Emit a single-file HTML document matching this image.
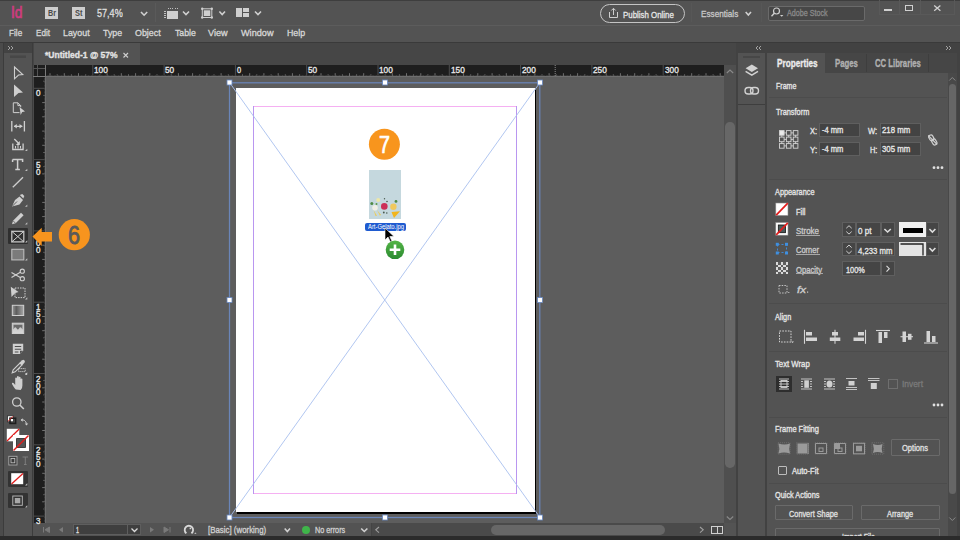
<!DOCTYPE html>
<html><head><meta charset="utf-8">
<style>
*{margin:0;padding:0;box-sizing:border-box}
html,body{width:960px;height:540px;overflow:hidden;background:#535353;font-family:"Liberation Sans",sans-serif}
.a{position:absolute}
.t{position:absolute;white-space:nowrap;line-height:1;-webkit-text-stroke:0.32px currentColor}
svg{position:absolute;overflow:visible}
</style></head><body>
<div class="a" style="left:0px;top:0px;width:960px;height:540px;background:#535353;"></div>
<div class="a" style="left:0px;top:0px;width:960px;height:1px;background:#3e3e3e;"></div>
<div class="a" style="left:0px;top:24.6px;width:960px;height:1.2px;background:#5c5c5c;"></div>
<div class="a" style="left:0px;top:42px;width:960px;height:1px;background:#3a3a3a;"></div>
<div class="a" style="left:0px;top:43px;width:3px;height:497px;background:#4b4b4b;"></div>
<div class="a" style="left:3px;top:43px;width:1px;height:494px;background:#3c3c3c;"></div>
<div class="a" style="left:32px;top:43px;width:1px;height:494px;background:#3c3c3c;"></div>
<div class="a" style="left:4px;top:43px;width:28px;height:10px;background:#434343;"></div>
<div class="a" style="left:33px;top:43px;width:703px;height:22px;background:#464646;"></div>
<div class="a" style="left:34px;top:43px;width:106px;height:22px;background:#535353;"></div>
<div class="a" style="left:34px;top:65px;width:690px;height:12px;background:#1e1e1e;"></div>
<div class="a" style="left:33px;top:65px;width:1px;height:458px;background:#4a4a4a;"></div>
<div class="a" style="left:34px;top:77px;width:12px;height:446px;background:#1e1e1e;"></div>
<div class="a" style="left:46px;top:77px;width:678px;height:446px;background:#5d5d5d;"></div>
<div class="a" style="left:724px;top:65px;width:12px;height:458px;background:#4f4f4f;"></div>
<div class="a" style="left:33px;top:523px;width:703px;height:13px;background:#535353;"></div>
<div class="a" style="left:371px;top:523px;width:353px;height:13px;background:#4a4a4a;"></div>
<div class="a" style="left:0px;top:536px;width:960px;height:4px;background:#2b2b2b;"></div>
<div class="a" style="left:736px;top:43px;width:224px;height:493px;background:#424242;"></div>
<div class="a" style="left:738px;top:53px;width:27px;height:483px;background:#535353;"></div>
<div class="a" style="left:767px;top:53px;width:190px;height:483px;background:#535353;"></div>
<div class="t" style="left:10.75px;top:4.10px;font-size:17.01px;font-weight:normal;color:#d03c80;transform:scaleX(0.814);transform-origin:0 0;-webkit-text-stroke:0.7px #d03c80;">Id</div>
<div class="a" style="left:45px;top:7px;width:13px;height:12px;background:#cdcdcd;"></div>
<div class="t" style="left:48.00px;top:9.71px;font-size:8.14px;font-weight:bold;color:#4a4a4a;transform:scaleX(0.885);transform-origin:0 0;-webkit-text-stroke:0;">Br</div>
<div class="a" style="left:72px;top:7px;width:13px;height:12px;background:#cdcdcd;"></div>
<div class="t" style="left:75.00px;top:9.71px;font-size:8.14px;font-weight:bold;color:#4a4a4a;transform:scaleX(0.921);transform-origin:0 0;-webkit-text-stroke:0;">St</div>
<div class="t" style="left:97.40px;top:9.14px;font-size:10.47px;font-weight:normal;color:#dedede;transform:scaleX(0.866);transform-origin:0 0;">57,4%</div>
<div class="a" style="left:155px;top:3px;width:1px;height:19px;background:#5a5a5a;"></div>
<div class="a" style="left:167px;top:10.5px;width:11px;height:8px;background:#cfcfcf;"></div>
<div class="a" style="left:168.0px;top:8px;width:1px;height:1px;background:#c0c0c0;"></div>
<div class="a" style="left:170.2px;top:8px;width:1px;height:1px;background:#c0c0c0;"></div>
<div class="a" style="left:172.4px;top:8px;width:1px;height:1px;background:#c0c0c0;"></div>
<div class="a" style="left:174.6px;top:8px;width:1px;height:1px;background:#c0c0c0;"></div>
<div class="a" style="left:176.8px;top:8px;width:1px;height:1px;background:#c0c0c0;"></div>
<div class="a" style="left:164px;top:11px;width:2px;height:1px;background:#c0c0c0;"></div>
<div class="a" style="left:164px;top:13px;width:2px;height:1px;background:#c0c0c0;"></div>
<div class="a" style="left:164px;top:15px;width:2px;height:1px;background:#c0c0c0;"></div>
<div class="a" style="left:164px;top:17px;width:2px;height:1px;background:#c0c0c0;"></div>
<svg style="left:0;top:0" width="960" height="540"><rect x="202.3" y="8.8" width="9.5" height="8.7" fill="none" stroke="#cfcfcf" stroke-width="1"/><rect x="203.8" y="10.3" width="6.5" height="5.7" fill="#cfcfcf"/><circle cx="202.2" cy="8.7" r="1.2" fill="#cfcfcf"/><circle cx="211.8" cy="8.7" r="1.2" fill="#cfcfcf"/><circle cx="202.2" cy="17.5" r="1.2" fill="#cfcfcf"/><circle cx="211.8" cy="17.5" r="1.2" fill="#cfcfcf"/></svg>
<div class="a" style="left:236px;top:8.2px;width:6.2px;height:8.6px;background:#cfcfcf;"></div>
<div class="a" style="left:243.2px;top:8.2px;width:6.2px;height:3.8px;background:#cfcfcf;"></div>
<div class="a" style="left:243.2px;top:13px;width:6.2px;height:3.8px;background:#cfcfcf;"></div>
<div class="a" style="left:600px;top:4px;width:85px;height:19px;background:transparent;border:1.2px solid #c4c4c4;border-radius:10px"></div>
<svg style="left:0;top:0" width="960" height="540"><path d="M609.5,12 v5.5 h8 v-5.5 M613.5,15 v-6.5 M611.3,10.5 l2.2,-2.2 l2.2,2.2" fill="none" stroke="#cfcfcf" stroke-width="1"/></svg>
<div class="t" style="left:623.30px;top:10.17px;font-size:9.59px;font-weight:normal;color:#e8e8e8;transform:scaleX(0.823);transform-origin:0 0;-webkit-text-stroke:0.3px #e8e8e8;">Publish Online</div>
<div class="a" style="left:691px;top:3px;width:1px;height:19px;background:#575757;"></div>
<div class="t" style="left:700.70px;top:8.93px;font-size:9.88px;font-weight:normal;color:#c8c8c8;transform:scaleX(0.828);transform-origin:0 0;">Essentials</div>
<div class="a" style="left:761px;top:3px;width:1px;height:19px;background:#575757;"></div>
<div class="a" style="left:768px;top:5.5px;width:97px;height:15px;background:#474747;border:1px solid #6a6a6a;border-radius:2px"></div>
<svg style="left:0;top:0" width="960" height="540"><circle cx="776.5" cy="11" r="3" fill="none" stroke="#cfcfcf" stroke-width="1.2"/><line x1="774.3" y1="13.3" x2="771.5" y2="16.3" stroke="#cfcfcf" stroke-width="1.4"/><path d="M780,15 h3.4 l-1.7,1.8z" fill="#cfcfcf"/></svg>
<div class="t" style="left:787.00px;top:9.12px;font-size:9.30px;font-weight:normal;color:#8a8a8a;transform:scaleX(0.771);transform-origin:0 0;">Adobe Stock</div>
<div class="a" style="left:879px;top:0px;width:76px;height:15px;background:transparent;border:1px solid #595959;border-top:none"></div>
<div class="a" style="left:899px;top:0px;width:1px;height:15px;background:#595959;"></div>
<div class="a" style="left:919.5px;top:0px;width:1px;height:15px;background:#595959;"></div>
<div class="a" style="left:884.3px;top:9.3px;width:7.6px;height:1.5px;background:#d0d0d0;"></div>
<div class="a" style="left:905.2px;top:5.2px;width:7.9px;height:5.5px;background:transparent;border:1.3px solid #d0d0d0;border-top-width:1.8px"></div>
<svg style="left:0;top:0" width="960" height="540"><path d="M934.2,5.5 l6.2,5.2 M940.4,5.5 l-6.2,5.2" stroke="#d0d0d0" stroke-width="1.3"/></svg>
<div class="t" style="left:9.20px;top:29.42px;font-size:9.30px;font-weight:normal;color:#d6d6d6;transform:scaleX(0.881);transform-origin:0 0;">File</div>
<div class="t" style="left:36.00px;top:29.42px;font-size:9.30px;font-weight:normal;color:#d6d6d6;transform:scaleX(0.873);transform-origin:0 0;">Edit</div>
<div class="t" style="left:63.00px;top:29.42px;font-size:9.30px;font-weight:normal;color:#d6d6d6;transform:scaleX(0.953);transform-origin:0 0;">Layout</div>
<div class="t" style="left:102.80px;top:29.42px;font-size:9.30px;font-weight:normal;color:#d6d6d6;transform:scaleX(0.947);transform-origin:0 0;">Type</div>
<div class="t" style="left:135.10px;top:29.42px;font-size:9.30px;font-weight:normal;color:#d6d6d6;transform:scaleX(0.956);transform-origin:0 0;">Object</div>
<div class="t" style="left:174.70px;top:29.42px;font-size:9.30px;font-weight:normal;color:#d6d6d6;transform:scaleX(0.940);transform-origin:0 0;">Table</div>
<div class="t" style="left:208.10px;top:29.42px;font-size:9.30px;font-weight:normal;color:#d6d6d6;transform:scaleX(0.982);transform-origin:0 0;">View</div>
<div class="t" style="left:240.60px;top:29.42px;font-size:9.30px;font-weight:normal;color:#d6d6d6;transform:scaleX(0.982);transform-origin:0 0;">Window</div>
<div class="t" style="left:286.90px;top:29.42px;font-size:9.30px;font-weight:normal;color:#d6d6d6;transform:scaleX(0.946);transform-origin:0 0;">Help</div>
<div class="t" style="left:45.30px;top:50.77px;font-size:9.01px;font-weight:bold;color:#e4e4e4;transform:scaleX(0.946);transform-origin:0 0;">*Untitled-1 @ 57%</div>
<svg style="left:0;top:0" width="960" height="540"><path d="M123.5,53 l4.5,4.5 M128,53 l-4.5,4.5" stroke="#cfcfcf" stroke-width="1.1"/></svg>
<svg style="left:0;top:0" width="960" height="540"><path d="M92.8,65v11.5M164.1,65v11.5M235.4,65v11.5M306.7,65v11.5M378.0,65v11.5M449.3,65v11.5M520.6,65v11.5M591.9,65v11.5M663.2,65v11.5M34,88.3h11.5M34,159.6h11.5M34,230.9h11.5M34,302.2h11.5M34,373.5h11.5M34,444.8h11.5M34,516.1h11.5" stroke="#4e4e4e" stroke-width="1" fill="none"/><path d="M50.0,73.2v3.3M64.3,73.2v3.3M78.5,73.2v3.3M107.1,73.2v3.3M121.3,73.2v3.3M135.6,73.2v3.3M149.8,73.2v3.3M178.4,73.2v3.3M192.6,73.2v3.3M206.9,73.2v3.3M221.1,73.2v3.3M249.7,73.2v3.3M263.9,73.2v3.3M278.2,73.2v3.3M292.4,73.2v3.3M321.0,73.2v3.3M335.2,73.2v3.3M349.5,73.2v3.3M363.7,73.2v3.3M392.3,73.2v3.3M406.5,73.2v3.3M420.8,73.2v3.3M435.0,73.2v3.3M463.6,73.2v3.3M477.8,73.2v3.3M492.1,73.2v3.3M506.3,73.2v3.3M534.9,73.2v3.3M549.1,73.2v3.3M563.4,73.2v3.3M577.6,73.2v3.3M606.2,73.2v3.3M620.4,73.2v3.3M634.7,73.2v3.3M648.9,73.2v3.3M677.5,73.2v3.3M691.7,73.2v3.3M706.0,73.2v3.3M720.2,73.2v3.3M42.2,102.6h3.3M42.2,116.8h3.3M42.2,131.1h3.3M42.2,145.3h3.3M42.2,173.9h3.3M42.2,188.1h3.3M42.2,202.4h3.3M42.2,216.6h3.3M42.2,245.2h3.3M42.2,259.4h3.3M42.2,273.7h3.3M42.2,287.9h3.3M42.2,316.5h3.3M42.2,330.7h3.3M42.2,345.0h3.3M42.2,359.2h3.3M42.2,387.8h3.3M42.2,402.0h3.3M42.2,416.3h3.3M42.2,430.5h3.3M42.2,459.1h3.3M42.2,473.3h3.3M42.2,487.6h3.3M42.2,501.8h3.3" stroke="#707070" stroke-width="1" fill="none"/><path d="M57.2,74.2v2.3M71.4,74.2v2.3M85.7,74.2v2.3M99.9,74.2v2.3M114.2,74.2v2.3M128.5,74.2v2.3M142.7,74.2v2.3M157.0,74.2v2.3M171.2,74.2v2.3M185.5,74.2v2.3M199.8,74.2v2.3M214.0,74.2v2.3M228.3,74.2v2.3M242.5,74.2v2.3M256.8,74.2v2.3M271.1,74.2v2.3M285.3,74.2v2.3M299.6,74.2v2.3M313.8,74.2v2.3M328.1,74.2v2.3M342.4,74.2v2.3M356.6,74.2v2.3M370.9,74.2v2.3M385.1,74.2v2.3M399.4,74.2v2.3M413.6,74.2v2.3M427.9,74.2v2.3M442.2,74.2v2.3M456.4,74.2v2.3M470.7,74.2v2.3M484.9,74.2v2.3M499.2,74.2v2.3M513.5,74.2v2.3M527.7,74.2v2.3M542.0,74.2v2.3M556.2,74.2v2.3M570.5,74.2v2.3M584.8,74.2v2.3M599.0,74.2v2.3M613.3,74.2v2.3M627.5,74.2v2.3M641.8,74.2v2.3M656.1,74.2v2.3M670.3,74.2v2.3M684.6,74.2v2.3M698.9,74.2v2.3M713.1,74.2v2.3M43.2,81.2h2.3M43.2,95.4h2.3M43.2,109.7h2.3M43.2,123.9h2.3M43.2,138.2h2.3M43.2,152.5h2.3M43.2,166.7h2.3M43.2,181.0h2.3M43.2,195.2h2.3M43.2,209.5h2.3M43.2,223.8h2.3M43.2,238.0h2.3M43.2,252.3h2.3M43.2,266.6h2.3M43.2,280.8h2.3M43.2,295.1h2.3M43.2,309.3h2.3M43.2,323.6h2.3M43.2,337.8h2.3M43.2,352.1h2.3M43.2,366.4h2.3M43.2,380.6h2.3M43.2,394.9h2.3M43.2,409.1h2.3M43.2,423.4h2.3M43.2,437.7h2.3M43.2,451.9h2.3M43.2,466.2h2.3M43.2,480.4h2.3M43.2,494.7h2.3M43.2,509.0h2.3" stroke="#606060" stroke-width="1" fill="none"/><path d="M47.2,75.2v1.3M48.6,75.2v1.3M51.4,75.2v1.3M52.9,75.2v1.3M54.3,75.2v1.3M55.7,75.2v1.3M58.6,75.2v1.3M60.0,75.2v1.3M61.4,75.2v1.3M62.9,75.2v1.3M65.7,75.2v1.3M67.1,75.2v1.3M68.6,75.2v1.3M70.0,75.2v1.3M72.8,75.2v1.3M74.3,75.2v1.3M75.7,75.2v1.3M77.1,75.2v1.3M80.0,75.2v1.3M81.4,75.2v1.3M82.8,75.2v1.3M84.2,75.2v1.3M87.1,75.2v1.3M88.5,75.2v1.3M89.9,75.2v1.3M91.4,75.2v1.3M94.2,75.2v1.3M95.7,75.2v1.3M97.1,75.2v1.3M98.5,75.2v1.3M101.4,75.2v1.3M102.8,75.2v1.3M104.2,75.2v1.3M105.6,75.2v1.3M108.5,75.2v1.3M109.9,75.2v1.3M111.3,75.2v1.3M112.8,75.2v1.3M115.6,75.2v1.3M117.0,75.2v1.3M118.5,75.2v1.3M119.9,75.2v1.3M122.7,75.2v1.3M124.2,75.2v1.3M125.6,75.2v1.3M127.0,75.2v1.3M129.9,75.2v1.3M131.3,75.2v1.3M132.7,75.2v1.3M134.2,75.2v1.3M137.0,75.2v1.3M138.4,75.2v1.3M139.9,75.2v1.3M141.3,75.2v1.3M144.1,75.2v1.3M145.6,75.2v1.3M147.0,75.2v1.3M148.4,75.2v1.3M151.3,75.2v1.3M152.7,75.2v1.3M154.1,75.2v1.3M155.5,75.2v1.3M158.4,75.2v1.3M159.8,75.2v1.3M161.2,75.2v1.3M162.7,75.2v1.3M165.5,75.2v1.3M167.0,75.2v1.3M168.4,75.2v1.3M169.8,75.2v1.3M172.7,75.2v1.3M174.1,75.2v1.3M175.5,75.2v1.3M176.9,75.2v1.3M179.8,75.2v1.3M181.2,75.2v1.3M182.6,75.2v1.3M184.1,75.2v1.3M186.9,75.2v1.3M188.3,75.2v1.3M189.8,75.2v1.3M191.2,75.2v1.3M194.0,75.2v1.3M195.5,75.2v1.3M196.9,75.2v1.3M198.3,75.2v1.3M201.2,75.2v1.3M202.6,75.2v1.3M204.0,75.2v1.3M205.5,75.2v1.3M208.3,75.2v1.3M209.7,75.2v1.3M211.2,75.2v1.3M212.6,75.2v1.3M215.4,75.2v1.3M216.9,75.2v1.3M218.3,75.2v1.3M219.7,75.2v1.3M222.6,75.2v1.3M224.0,75.2v1.3M225.4,75.2v1.3M226.8,75.2v1.3M229.7,75.2v1.3M231.1,75.2v1.3M232.5,75.2v1.3M234.0,75.2v1.3M236.8,75.2v1.3M238.3,75.2v1.3M239.7,75.2v1.3M241.1,75.2v1.3M244.0,75.2v1.3M245.4,75.2v1.3M246.8,75.2v1.3M248.2,75.2v1.3M251.1,75.2v1.3M252.5,75.2v1.3M253.9,75.2v1.3M255.4,75.2v1.3M258.2,75.2v1.3M259.6,75.2v1.3M261.1,75.2v1.3M262.5,75.2v1.3M265.3,75.2v1.3M266.8,75.2v1.3M268.2,75.2v1.3M269.6,75.2v1.3M272.5,75.2v1.3M273.9,75.2v1.3M275.3,75.2v1.3M276.8,75.2v1.3M279.6,75.2v1.3M281.0,75.2v1.3M282.5,75.2v1.3M283.9,75.2v1.3M286.7,75.2v1.3M288.2,75.2v1.3M289.6,75.2v1.3M291.0,75.2v1.3M293.9,75.2v1.3M295.3,75.2v1.3M296.7,75.2v1.3M298.1,75.2v1.3M301.0,75.2v1.3M302.4,75.2v1.3M303.8,75.2v1.3M305.3,75.2v1.3M308.1,75.2v1.3M309.6,75.2v1.3M311.0,75.2v1.3M312.4,75.2v1.3M315.3,75.2v1.3M316.7,75.2v1.3M318.1,75.2v1.3M319.5,75.2v1.3M322.4,75.2v1.3M323.8,75.2v1.3M325.2,75.2v1.3M326.7,75.2v1.3M329.5,75.2v1.3M330.9,75.2v1.3M332.4,75.2v1.3M333.8,75.2v1.3M336.6,75.2v1.3M338.1,75.2v1.3M339.5,75.2v1.3M340.9,75.2v1.3M343.8,75.2v1.3M345.2,75.2v1.3M346.6,75.2v1.3M348.1,75.2v1.3M350.9,75.2v1.3M352.3,75.2v1.3M353.8,75.2v1.3M355.2,75.2v1.3M358.0,75.2v1.3M359.5,75.2v1.3M360.9,75.2v1.3M362.3,75.2v1.3M365.2,75.2v1.3M366.6,75.2v1.3M368.0,75.2v1.3M369.4,75.2v1.3M372.3,75.2v1.3M373.7,75.2v1.3M375.1,75.2v1.3M376.6,75.2v1.3M379.4,75.2v1.3M380.9,75.2v1.3M382.3,75.2v1.3M383.7,75.2v1.3M386.6,75.2v1.3M388.0,75.2v1.3M389.4,75.2v1.3M390.8,75.2v1.3M393.7,75.2v1.3M395.1,75.2v1.3M396.5,75.2v1.3M398.0,75.2v1.3M400.8,75.2v1.3M402.2,75.2v1.3M403.7,75.2v1.3M405.1,75.2v1.3M407.9,75.2v1.3M409.4,75.2v1.3M410.8,75.2v1.3M412.2,75.2v1.3M415.1,75.2v1.3M416.5,75.2v1.3M417.9,75.2v1.3M419.4,75.2v1.3M422.2,75.2v1.3M423.6,75.2v1.3M425.1,75.2v1.3M426.5,75.2v1.3M429.3,75.2v1.3M430.8,75.2v1.3M432.2,75.2v1.3M433.6,75.2v1.3M436.5,75.2v1.3M437.9,75.2v1.3M439.3,75.2v1.3M440.7,75.2v1.3M443.6,75.2v1.3M445.0,75.2v1.3M446.4,75.2v1.3M447.9,75.2v1.3M450.7,75.2v1.3M452.2,75.2v1.3M453.6,75.2v1.3M455.0,75.2v1.3M457.9,75.2v1.3M459.3,75.2v1.3M460.7,75.2v1.3M462.1,75.2v1.3M465.0,75.2v1.3M466.4,75.2v1.3M467.8,75.2v1.3M469.3,75.2v1.3M472.1,75.2v1.3M473.5,75.2v1.3M475.0,75.2v1.3M476.4,75.2v1.3M479.2,75.2v1.3M480.7,75.2v1.3M482.1,75.2v1.3M483.5,75.2v1.3M486.4,75.2v1.3M487.8,75.2v1.3M489.2,75.2v1.3M490.7,75.2v1.3M493.5,75.2v1.3M494.9,75.2v1.3M496.4,75.2v1.3M497.8,75.2v1.3M500.6,75.2v1.3M502.1,75.2v1.3M503.5,75.2v1.3M504.9,75.2v1.3M507.8,75.2v1.3M509.2,75.2v1.3M510.6,75.2v1.3M512.0,75.2v1.3M514.9,75.2v1.3M516.3,75.2v1.3M517.7,75.2v1.3M519.2,75.2v1.3M522.0,75.2v1.3M523.5,75.2v1.3M524.9,75.2v1.3M526.3,75.2v1.3M529.2,75.2v1.3M530.6,75.2v1.3M532.0,75.2v1.3M533.4,75.2v1.3M536.3,75.2v1.3M537.7,75.2v1.3M539.1,75.2v1.3M540.6,75.2v1.3M543.4,75.2v1.3M544.8,75.2v1.3M546.3,75.2v1.3M547.7,75.2v1.3M550.5,75.2v1.3M552.0,75.2v1.3M553.4,75.2v1.3M554.8,75.2v1.3M557.7,75.2v1.3M559.1,75.2v1.3M560.5,75.2v1.3M562.0,75.2v1.3M564.8,75.2v1.3M566.2,75.2v1.3M567.7,75.2v1.3M569.1,75.2v1.3M571.9,75.2v1.3M573.4,75.2v1.3M574.8,75.2v1.3M576.2,75.2v1.3M579.1,75.2v1.3M580.5,75.2v1.3M581.9,75.2v1.3M583.3,75.2v1.3M586.2,75.2v1.3M587.6,75.2v1.3M589.0,75.2v1.3M590.5,75.2v1.3M593.3,75.2v1.3M594.8,75.2v1.3M596.2,75.2v1.3M597.6,75.2v1.3M600.5,75.2v1.3M601.9,75.2v1.3M603.3,75.2v1.3M604.7,75.2v1.3M607.6,75.2v1.3M609.0,75.2v1.3M610.4,75.2v1.3M611.9,75.2v1.3M614.7,75.2v1.3M616.1,75.2v1.3M617.6,75.2v1.3M619.0,75.2v1.3M621.8,75.2v1.3M623.3,75.2v1.3M624.7,75.2v1.3M626.1,75.2v1.3M629.0,75.2v1.3M630.4,75.2v1.3M631.8,75.2v1.3M633.3,75.2v1.3M636.1,75.2v1.3M637.5,75.2v1.3M639.0,75.2v1.3M640.4,75.2v1.3M643.2,75.2v1.3M644.7,75.2v1.3M646.1,75.2v1.3M647.5,75.2v1.3M650.4,75.2v1.3M651.8,75.2v1.3M653.2,75.2v1.3M654.6,75.2v1.3M657.5,75.2v1.3M658.9,75.2v1.3M660.3,75.2v1.3M661.8,75.2v1.3M664.6,75.2v1.3M666.1,75.2v1.3M667.5,75.2v1.3M668.9,75.2v1.3M671.8,75.2v1.3M673.2,75.2v1.3M674.6,75.2v1.3M676.0,75.2v1.3M678.9,75.2v1.3M680.3,75.2v1.3M681.7,75.2v1.3M683.2,75.2v1.3M686.0,75.2v1.3M687.4,75.2v1.3M688.9,75.2v1.3M690.3,75.2v1.3M693.1,75.2v1.3M694.6,75.2v1.3M696.0,75.2v1.3M697.4,75.2v1.3M700.3,75.2v1.3M701.7,75.2v1.3M703.1,75.2v1.3M704.6,75.2v1.3M707.4,75.2v1.3M708.8,75.2v1.3M710.3,75.2v1.3M711.7,75.2v1.3M714.5,75.2v1.3M716.0,75.2v1.3M717.4,75.2v1.3M718.8,75.2v1.3M721.7,75.2v1.3M723.1,75.2v1.3M44.2,78.3h1.3M44.2,79.7h1.3M44.2,82.6h1.3M44.2,84.0h1.3M44.2,85.4h1.3M44.2,86.9h1.3M44.2,89.7h1.3M44.2,91.2h1.3M44.2,92.6h1.3M44.2,94.0h1.3M44.2,96.9h1.3M44.2,98.3h1.3M44.2,99.7h1.3M44.2,101.1h1.3M44.2,104.0h1.3M44.2,105.4h1.3M44.2,106.8h1.3M44.2,108.3h1.3M44.2,111.1h1.3M44.2,112.5h1.3M44.2,114.0h1.3M44.2,115.4h1.3M44.2,118.2h1.3M44.2,119.7h1.3M44.2,121.1h1.3M44.2,122.5h1.3M44.2,125.4h1.3M44.2,126.8h1.3M44.2,128.2h1.3M44.2,129.7h1.3M44.2,132.5h1.3M44.2,133.9h1.3M44.2,135.4h1.3M44.2,136.8h1.3M44.2,139.6h1.3M44.2,141.1h1.3M44.2,142.5h1.3M44.2,143.9h1.3M44.2,146.8h1.3M44.2,148.2h1.3M44.2,149.6h1.3M44.2,151.0h1.3M44.2,153.9h1.3M44.2,155.3h1.3M44.2,156.7h1.3M44.2,158.2h1.3M44.2,161.0h1.3M44.2,162.5h1.3M44.2,163.9h1.3M44.2,165.3h1.3M44.2,168.2h1.3M44.2,169.6h1.3M44.2,171.0h1.3M44.2,172.4h1.3M44.2,175.3h1.3M44.2,176.7h1.3M44.2,178.1h1.3M44.2,179.6h1.3M44.2,182.4h1.3M44.2,183.8h1.3M44.2,185.3h1.3M44.2,186.7h1.3M44.2,189.5h1.3M44.2,191.0h1.3M44.2,192.4h1.3M44.2,193.8h1.3M44.2,196.7h1.3M44.2,198.1h1.3M44.2,199.5h1.3M44.2,201.0h1.3M44.2,203.8h1.3M44.2,205.2h1.3M44.2,206.7h1.3M44.2,208.1h1.3M44.2,210.9h1.3M44.2,212.4h1.3M44.2,213.8h1.3M44.2,215.2h1.3M44.2,218.1h1.3M44.2,219.5h1.3M44.2,220.9h1.3M44.2,222.3h1.3M44.2,225.2h1.3M44.2,226.6h1.3M44.2,228.0h1.3M44.2,229.5h1.3M44.2,232.3h1.3M44.2,233.8h1.3M44.2,235.2h1.3M44.2,236.6h1.3M44.2,239.5h1.3M44.2,240.9h1.3M44.2,242.3h1.3M44.2,243.7h1.3M44.2,246.6h1.3M44.2,248.0h1.3M44.2,249.4h1.3M44.2,250.9h1.3M44.2,253.7h1.3M44.2,255.1h1.3M44.2,256.6h1.3M44.2,258.0h1.3M44.2,260.8h1.3M44.2,262.3h1.3M44.2,263.7h1.3M44.2,265.1h1.3M44.2,268.0h1.3M44.2,269.4h1.3M44.2,270.8h1.3M44.2,272.3h1.3M44.2,275.1h1.3M44.2,276.5h1.3M44.2,278.0h1.3M44.2,279.4h1.3M44.2,282.2h1.3M44.2,283.7h1.3M44.2,285.1h1.3M44.2,286.5h1.3M44.2,289.4h1.3M44.2,290.8h1.3M44.2,292.2h1.3M44.2,293.6h1.3M44.2,296.5h1.3M44.2,297.9h1.3M44.2,299.3h1.3M44.2,300.8h1.3M44.2,303.6h1.3M44.2,305.1h1.3M44.2,306.5h1.3M44.2,307.9h1.3M44.2,310.8h1.3M44.2,312.2h1.3M44.2,313.6h1.3M44.2,315.0h1.3M44.2,317.9h1.3M44.2,319.3h1.3M44.2,320.7h1.3M44.2,322.2h1.3M44.2,325.0h1.3M44.2,326.4h1.3M44.2,327.9h1.3M44.2,329.3h1.3M44.2,332.1h1.3M44.2,333.6h1.3M44.2,335.0h1.3M44.2,336.4h1.3M44.2,339.3h1.3M44.2,340.7h1.3M44.2,342.1h1.3M44.2,343.6h1.3M44.2,346.4h1.3M44.2,347.8h1.3M44.2,349.3h1.3M44.2,350.7h1.3M44.2,353.5h1.3M44.2,355.0h1.3M44.2,356.4h1.3M44.2,357.8h1.3M44.2,360.7h1.3M44.2,362.1h1.3M44.2,363.5h1.3M44.2,364.9h1.3M44.2,367.8h1.3M44.2,369.2h1.3M44.2,370.6h1.3M44.2,372.1h1.3M44.2,374.9h1.3M44.2,376.4h1.3M44.2,377.8h1.3M44.2,379.2h1.3M44.2,382.1h1.3M44.2,383.5h1.3M44.2,384.9h1.3M44.2,386.3h1.3M44.2,389.2h1.3M44.2,390.6h1.3M44.2,392.0h1.3M44.2,393.5h1.3M44.2,396.3h1.3M44.2,397.7h1.3M44.2,399.2h1.3M44.2,400.6h1.3M44.2,403.4h1.3M44.2,404.9h1.3M44.2,406.3h1.3M44.2,407.7h1.3M44.2,410.6h1.3M44.2,412.0h1.3M44.2,413.4h1.3M44.2,414.9h1.3M44.2,417.7h1.3M44.2,419.1h1.3M44.2,420.6h1.3M44.2,422.0h1.3M44.2,424.8h1.3M44.2,426.3h1.3M44.2,427.7h1.3M44.2,429.1h1.3M44.2,432.0h1.3M44.2,433.4h1.3M44.2,434.8h1.3M44.2,436.2h1.3M44.2,439.1h1.3M44.2,440.5h1.3M44.2,441.9h1.3M44.2,443.4h1.3M44.2,446.2h1.3M44.2,447.7h1.3M44.2,449.1h1.3M44.2,450.5h1.3M44.2,453.4h1.3M44.2,454.8h1.3M44.2,456.2h1.3M44.2,457.6h1.3M44.2,460.5h1.3M44.2,461.9h1.3M44.2,463.3h1.3M44.2,464.8h1.3M44.2,467.6h1.3M44.2,469.0h1.3M44.2,470.5h1.3M44.2,471.9h1.3M44.2,474.7h1.3M44.2,476.2h1.3M44.2,477.6h1.3M44.2,479.0h1.3M44.2,481.9h1.3M44.2,483.3h1.3M44.2,484.7h1.3M44.2,486.2h1.3M44.2,489.0h1.3M44.2,490.4h1.3M44.2,491.9h1.3M44.2,493.3h1.3M44.2,496.1h1.3M44.2,497.6h1.3M44.2,499.0h1.3M44.2,500.4h1.3M44.2,503.3h1.3M44.2,504.7h1.3M44.2,506.1h1.3M44.2,507.5h1.3M44.2,510.4h1.3M44.2,511.8h1.3M44.2,513.2h1.3M44.2,514.7h1.3M44.2,517.5h1.3M44.2,519.0h1.3M44.2,520.4h1.3M44.2,521.8h1.3" stroke="#505050" stroke-width="0.8" fill="none"/><path d="M555.2,65 v11" stroke="#8a8a8a" stroke-width="1" stroke-dasharray="1,1"/><line x1="46" y1="76.5" x2="724" y2="76.5" stroke="#6e6e6e" stroke-width="1"/><line x1="45.5" y1="77" x2="45.5" y2="523" stroke="#6e6e6e" stroke-width="1"/><path d="M33,68.5 h12.5 M37.5,65 v12" stroke="#555555" stroke-width="1"/><path d="M33,76.5 h13 M45.5,65 v12" stroke="#7a7a7a" stroke-width="1"/></svg>
<div class="t" style="left:94.10px;top:65.96px;font-size:8.43px;font-weight:normal;color:#e8e8e8;transform:scaleX(0.981);transform-origin:0 0;">100</div>
<div class="t" style="left:165.40px;top:65.96px;font-size:8.43px;font-weight:normal;color:#e8e8e8;transform:scaleX(0.981);transform-origin:0 0;">50</div>
<div class="t" style="left:236.70px;top:65.96px;font-size:8.43px;font-weight:normal;color:#e8e8e8;transform:scaleX(0.875);transform-origin:0 0;">0</div>
<div class="t" style="left:308.00px;top:65.96px;font-size:8.43px;font-weight:normal;color:#e8e8e8;transform:scaleX(0.981);transform-origin:0 0;">50</div>
<div class="t" style="left:379.30px;top:65.96px;font-size:8.43px;font-weight:normal;color:#e8e8e8;transform:scaleX(0.981);transform-origin:0 0;">100</div>
<div class="t" style="left:450.60px;top:65.96px;font-size:8.43px;font-weight:normal;color:#e8e8e8;transform:scaleX(0.981);transform-origin:0 0;">150</div>
<div class="t" style="left:521.90px;top:65.96px;font-size:8.43px;font-weight:normal;color:#e8e8e8;transform:scaleX(0.981);transform-origin:0 0;">200</div>
<div class="t" style="left:593.20px;top:65.96px;font-size:8.43px;font-weight:normal;color:#e8e8e8;transform:scaleX(0.981);transform-origin:0 0;">250</div>
<div class="t" style="left:664.50px;top:65.96px;font-size:8.43px;font-weight:normal;color:#e8e8e8;transform:scaleX(0.981);transform-origin:0 0;">300</div>
<div class="t" style="left:35.80px;top:89.49px;font-size:8.87px;font-weight:normal;color:#e8e8e8;transform:scaleX(0.913);transform-origin:0 0;">0</div>
<div class="t" style="left:35.80px;top:160.79px;font-size:8.87px;font-weight:normal;color:#e8e8e8;transform:scaleX(0.913);transform-origin:0 0;">5</div>
<div class="t" style="left:35.80px;top:167.64px;font-size:8.87px;font-weight:normal;color:#e8e8e8;transform:scaleX(0.913);transform-origin:0 0;">0</div>
<div class="t" style="left:35.80px;top:232.09px;font-size:8.87px;font-weight:normal;color:#e8e8e8;transform:scaleX(0.913);transform-origin:0 0;">1</div>
<div class="t" style="left:35.80px;top:238.94px;font-size:8.87px;font-weight:normal;color:#e8e8e8;transform:scaleX(0.913);transform-origin:0 0;">0</div>
<div class="t" style="left:35.80px;top:245.79px;font-size:8.87px;font-weight:normal;color:#e8e8e8;transform:scaleX(0.913);transform-origin:0 0;">0</div>
<div class="t" style="left:35.80px;top:303.39px;font-size:8.87px;font-weight:normal;color:#e8e8e8;transform:scaleX(0.913);transform-origin:0 0;">1</div>
<div class="t" style="left:35.80px;top:310.24px;font-size:8.87px;font-weight:normal;color:#e8e8e8;transform:scaleX(0.913);transform-origin:0 0;">5</div>
<div class="t" style="left:35.80px;top:317.09px;font-size:8.87px;font-weight:normal;color:#e8e8e8;transform:scaleX(0.913);transform-origin:0 0;">0</div>
<div class="t" style="left:35.80px;top:374.69px;font-size:8.87px;font-weight:normal;color:#e8e8e8;transform:scaleX(0.913);transform-origin:0 0;">2</div>
<div class="t" style="left:35.80px;top:381.54px;font-size:8.87px;font-weight:normal;color:#e8e8e8;transform:scaleX(0.913);transform-origin:0 0;">0</div>
<div class="t" style="left:35.80px;top:388.39px;font-size:8.87px;font-weight:normal;color:#e8e8e8;transform:scaleX(0.913);transform-origin:0 0;">0</div>
<div class="t" style="left:35.80px;top:445.99px;font-size:8.87px;font-weight:normal;color:#e8e8e8;transform:scaleX(0.913);transform-origin:0 0;">2</div>
<div class="t" style="left:35.80px;top:452.84px;font-size:8.87px;font-weight:normal;color:#e8e8e8;transform:scaleX(0.913);transform-origin:0 0;">5</div>
<div class="t" style="left:35.80px;top:459.69px;font-size:8.87px;font-weight:normal;color:#e8e8e8;transform:scaleX(0.913);transform-origin:0 0;">0</div>
<div class="t" style="left:35.80px;top:517.29px;font-size:8.87px;font-weight:normal;color:#e8e8e8;transform:scaleX(0.913);transform-origin:0 0;">3</div>
<div class="a" style="left:237.0px;top:89.5px;width:299.0px;height:424px;background:#000000;"></div>
<div class="a" style="left:235.5px;top:88px;width:299.0px;height:424px;background:#ffffff;"></div>
<svg style="left:0;top:0" width="960" height="540"><path d="M253.5,106.5 h263 M253.5,493.5 h263" stroke="#f5b0f2" stroke-width="1"/><path d="M253.5,106 v388 M516.5,106 v388" stroke="#b996f0" stroke-width="1"/><line x1="229.5" y1="82.5" x2="540" y2="517.5" stroke="#a8c0ee" stroke-width="0.9"/><line x1="540" y1="82.5" x2="229.5" y2="517.5" stroke="#a8c0ee" stroke-width="0.9"/><rect x="229.5" y="82.8" width="310.3" height="434.7" fill="none" stroke="#6a85b8" stroke-width="1.25"/><rect x="227.0" y="80.0" width="5" height="5" fill="#ffffff" stroke="#6787c0" stroke-width="0.8"/><rect x="227.0" y="297.5" width="5" height="5" fill="#ffffff" stroke="#6787c0" stroke-width="0.8"/><rect x="227.0" y="515.0" width="5" height="5" fill="#ffffff" stroke="#6787c0" stroke-width="0.8"/><rect x="382.5" y="80.0" width="5" height="5" fill="#ffffff" stroke="#6787c0" stroke-width="0.8"/><rect x="382.5" y="515.0" width="5" height="5" fill="#ffffff" stroke="#6787c0" stroke-width="0.8"/><rect x="537.5" y="80.0" width="5" height="5" fill="#ffffff" stroke="#6787c0" stroke-width="0.8"/><rect x="537.5" y="297.5" width="5" height="5" fill="#ffffff" stroke="#6787c0" stroke-width="0.8"/><rect x="537.5" y="515.0" width="5" height="5" fill="#ffffff" stroke="#6787c0" stroke-width="0.8"/></svg>
<svg style="left:0;top:0" width="960" height="540"><circle cx="384.4" cy="144.3" r="15.5" fill="#f8951d"/></svg>
<div class="t" style="left:379.00px;top:133.07px;font-size:24.71px;font-weight:normal;color:#ffffff;transform:scaleX(0.801);transform-origin:0 0;-webkit-text-stroke:0.7px #ffffff;">7</div>
<div class="a" style="left:368.7px;top:170.3px;width:32.3px;height:49.2px;background:#c5d8de;"></div>
<svg style="left:0;top:0" width="960" height="540"><circle cx="378.2" cy="200" r="2" fill="#ede8a8"/><circle cx="371.8" cy="203.4" r="1.5" fill="#4f8a45"/><circle cx="376.5" cy="204" r="1" fill="#5a9a4a"/><circle cx="375" cy="207.8" r="2.8" fill="#f1efe6"/><path d="M373.5,210 l2,6 l1.5,-0.3 z M377,210 l2.8,5.6 l1.3,-0.6 z" fill="#eccc58"/><circle cx="384.3" cy="206.4" r="3.3" fill="#cc2f58"/><circle cx="384.5" cy="198.8" r="0.7" fill="#4a5a50"/><circle cx="387" cy="201.5" r="0.8" fill="#4a5a50"/><circle cx="383.8" cy="212.5" r="0.9" fill="#4a5a50"/><circle cx="386.8" cy="213" r="0.8" fill="#4a5a50"/><circle cx="393.4" cy="206.7" r="3.2" fill="#f0c85c"/><circle cx="396" cy="201.4" r="1.4" fill="#4f8a45"/><path d="M391.5,212 l8.5,-0.8 l-6,6.8 z" fill="#f2b51e"/></svg>
<div class="a" style="left:364.7px;top:222.5px;width:41.8px;height:8.2px;background:#1f5bd0;border-radius:2px"></div>
<div class="t" style="left:367.50px;top:224.34px;font-size:6.69px;font-weight:normal;color:#ffffff;transform:scaleX(0.873);transform-origin:0 0;-webkit-text-stroke:0;">Art-Gelato.jpg</div>
<svg style="left:0;top:0" width="960" height="540"><path d="M385,228 L385,240 L388,237 L390.5,242 L392,241.3 L389.8,236.5 L394,236.5 Z" fill="#000" stroke="#fff" stroke-width="0.6"/></svg>
<svg style="left:0;top:0" width="960" height="540"><defs><linearGradient id="gp" x1="0" y1="0" x2="0" y2="1"><stop offset="0" stop-color="#55b547"/><stop offset="1" stop-color="#2a8a30"/></linearGradient></defs><circle cx="395" cy="249.8" r="9.3" fill="url(#gp)"/><path d="M395,244.5 v10.6 M389.7,249.8 h10.6" stroke="#fff" stroke-width="2.6"/></svg>
<svg style="left:0;top:0" width="960" height="540"><path d="M32.5,236.6 L41.7,227.7 L41.7,232 L52,232 L52,241.6 L41.7,241.6 L41.7,246 Z" fill="#f7941e"/><circle cx="74.3" cy="234.7" r="15.6" fill="#f7941e"/></svg>
<div class="t" style="left:68.00px;top:222.76px;font-size:25.44px;font-weight:normal;color:#5a5a5a;transform:scaleX(0.849);transform-origin:0 0;-webkit-text-stroke:0.8px #5a5a5a;">6</div>
<svg style="left:0;top:0" width="960" height="540"><path d="M43.5,527 v5.5 M49.5,527 l-4.5,2.75 l4.5,2.75z" stroke="#7a7a7a" fill="#7a7a7a" stroke-width="1"/><path d="M63,527 l-4,2.75 l4,2.75z" fill="#7a7a7a"/><path d="M150,527 l4,2.75 l-4,2.75z" fill="#7a7a7a"/><path d="M164,527 l4.5,2.75 l-4.5,2.75z M170,527 v5.5" stroke="#7a7a7a" fill="#7a7a7a" stroke-width="1"/></svg>
<div class="a" style="left:72.8px;top:523.8px;width:68px;height:11.6px;background:#3f3f3f;border:1px solid #5e5e5e"></div>
<div class="a" style="left:127px;top:524.5px;width:1px;height:10.5px;background:#5e5e5e;"></div>
<div class="t" style="left:76.00px;top:526.26px;font-size:8.43px;font-weight:normal;color:#e0e0e0;transform:scaleX(0.640);transform-origin:0 0;">1</div>
<svg style="left:0;top:0" width="960" height="540"><path d="M186.4,533.3 A4.2,4.2 0 1 1 191.4,533.3" fill="none" stroke="#d8d8d8" stroke-width="1.8"/><rect x="189.6" y="527.6" width="1.5" height="1.6" fill="#d8d8d8"/><path d="M194.2,533.8 l1.2,-1.4 l1.2,1.4z" fill="#d8d8d8"/></svg>
<div class="t" style="left:207.80px;top:526.44px;font-size:9.16px;font-weight:normal;color:#d0d0d0;transform:scaleX(0.860);transform-origin:0 0;">[Basic] (working)</div>
<svg style="left:0;top:0" width="960" height="540"><circle cx="306" cy="530" r="4" fill="#3fb54a"/></svg>
<div class="t" style="left:314.80px;top:526.44px;font-size:9.16px;font-weight:normal;color:#d0d0d0;transform:scaleX(0.791);transform-origin:0 0;">No errors</div>
<div class="a" style="left:371px;top:523px;width:1px;height:13px;background:#444444;"></div>
<svg style="left:0;top:0" width="960" height="540"><polyline points="379,527 375.8,529.8 379,532.6" fill="none" stroke="#a0a0a0" stroke-width="1.1"/><polyline points="700,527 703.2,529.8 700,532.6" fill="none" stroke="#a0a0a0" stroke-width="1.1"/></svg>
<div class="a" style="left:491.3px;top:524.5px;width:174.2px;height:10.5px;background:#676767;border-radius:5px"></div>
<div class="a" style="left:711.3px;top:526px;width:11.4px;height:8px;background:transparent;border:1.2px solid #d0d0d0"></div>
<div class="a" style="left:716.5px;top:526px;width:1.2px;height:8px;background:#d0d0d0;"></div>
<svg style="left:0;top:0" width="960" height="540"><polyline points="726.8,73 730,70 733.2,73" fill="none" stroke="#8a8a8a" stroke-width="1.1"/><polyline points="726.8,516.5 730,519.5 733.2,516.5" fill="none" stroke="#8a8a8a" stroke-width="1.1"/></svg>
<div class="a" style="left:725.3px;top:122px;width:9.6px;height:346px;background:#676767;border-radius:4.8px"></div>
<svg style="left:0;top:0" width="960" height="540"><rect x="10" y="55.5" width="16" height="2.5" fill="#474747"/><path d="M8,46 l2,2 l-2,2 M11,46 l2,2 l-2,2" fill="none" stroke="#bdbdbd" stroke-width="0.8"/><polygon points="14.5,67 22.8,74.5 18.5,75 14.5,78.8" fill="none" stroke="#cfcfcf" stroke-width="1.1"/><polygon points="14,84.5 23,92.5 18.5,93 14,97" fill="#cfcfcf"/><path d="M19.5,112.6 h-6.2 v-9.8 h4.6 l2.8,2.8 v1.5 M17.9,102.8 v2.8 h2.8" fill="none" stroke="#cfcfcf" stroke-width="1"/><polygon points="19.6,107 25,111.6 22.2,112 20.6,115" fill="#cfcfcf"/><path d="M11.8,121 v10.5 M24.4,121 v10.5 M14,126.3 h8.3" stroke="#cfcfcf" stroke-width="1.3" fill="none"/><path d="M13.8,126.3 l3,-2.2 v4.4z M22.5,126.3 l-3,-2.2 v4.4z" fill="#cfcfcf"/><path d="M12.8,143.5 v6 h10.3 v-6" stroke="#cfcfcf" stroke-width="1.3" fill="none"/><path d="M14.3,139 l4.5,4.5" stroke="#cfcfcf" stroke-width="1.3"/><path d="M19.8,141 v4 h-4z" fill="#cfcfcf"/><rect x="15" y="146" width="1" height="2.5" fill="#cfcfcf"/><rect x="17.5" y="145" width="1" height="3.5" fill="#cfcfcf"/><rect x="20" y="146" width="1" height="2.5" fill="#cfcfcf"/><polygon points="27.3,148.7 27.3,151 25,151" fill="#bdbdbd"/><polygon points="27.3,168.7 27.3,171 25,171" fill="#bdbdbd"/><polygon points="27.3,204.5 27.3,206.8 25,206.8" fill="#bdbdbd"/><polygon points="27.3,222.29999999999998 27.3,224.6 25,224.6" fill="#bdbdbd"/><polygon points="27.3,240.29999999999998 27.3,242.6 25,242.6" fill="#bdbdbd"/><polygon points="27.3,258.3 27.3,260.6 25,260.6" fill="#bdbdbd"/><polygon points="27.3,297.3 27.3,299.6 25,299.6" fill="#bdbdbd"/><polygon points="27.3,372.3 27.3,374.6 25,374.6" fill="#bdbdbd"/><polygon points="27.3,483.3 27.3,485.6 25,485.6" fill="#bdbdbd"/><polygon points="27.3,505.3 27.3,507.6 25,507.6" fill="#bdbdbd"/><path d="M12.6,159.6 h10 v2.5 M12.6,159.6 v2.5 M17.6,159.6 v10 M15.3,169.6 h4.6" stroke="#cfcfcf" stroke-width="1.5" fill="none"/><path d="M12.8,187.2 L23,177.2" stroke="#cfcfcf" stroke-width="1.3"/><path d="M12,206.5 l3,-6.5 l4.5,-3.5 l3.5,3.5 l-3.5,4.5 z" fill="#cfcfcf"/><path d="M19.8,195 l2.5,-1 l2,2 l-1,2.5z" fill="#cfcfcf"/><path d="M12.5,206 l4.5,-4.5" stroke="#535353" stroke-width="0.9"/><path d="M12,224.3 l1,-3.6 l8,-8 l2.6,2.6 l-8,8 z" fill="#cfcfcf"/><path d="M13,220.7 l2.6,2.6" stroke="#535353" stroke-width="0.8"/></svg>
<div class="a" style="left:8px;top:228.3px;width:20px;height:16px;background:#2f2f2f;border-radius:1px"></div>
<svg style="left:0;top:0" width="960" height="540"><defs><linearGradient id="gs" x1="0" x2="1"><stop offset="0" stop-color="#9a9a9a"/><stop offset="0.35" stop-color="#5c5c5c"/><stop offset="1" stop-color="#a8a8a8"/></linearGradient><linearGradient id="gf" x1="0" x2="0" y1="0" y2="1"><stop offset="0" stop-color="#bdbdbd"/><stop offset="1" stop-color="#d8d8d8"/></linearGradient></defs><rect x="12.3" y="305.3" width="11.4" height="10.2" fill="url(#gs)" stroke="#d0d0d0" stroke-width="1"/><rect x="12.3" y="323.2" width="11.4" height="10.3" fill="url(#gf)" stroke="#d0d0d0" stroke-width="1"/><path d="M13.5,329.5 q1.5,-4 3.2,-1 q1.2,2 2.3,0 q1.6,-3 3.4,1 v-4.8 h-8.9z" fill="#6a6a6a"/></svg>
<svg style="left:0;top:0" width="960" height="540"><rect x="11.8" y="231.3" width="12" height="10.6" fill="none" stroke="#cfcfcf" stroke-width="1.2"/><path d="M11.8,231.3 l12,10.6 M23.8,231.3 l-12,10.6" stroke="#cfcfcf" stroke-width="1"/><polygon points="27.3,240.3 27.3,242.6 25,242.6" fill="#bdbdbd"/><rect x="11.8" y="249.3" width="12" height="10.6" fill="#7b7b7b" stroke="#bdbdbd" stroke-width="1.1"/><circle cx="22.3" cy="271.2" r="2.1" fill="none" stroke="#cfcfcf" stroke-width="1.1"/><circle cx="22.3" cy="278.7" r="2.1" fill="none" stroke="#cfcfcf" stroke-width="1.1"/><path d="M20.3,272.3 L11.5,277.5 M20.3,277.6 L11.5,272.4" stroke="#cfcfcf" stroke-width="1.2"/><rect x="15" y="288" width="10" height="9.6" fill="none" stroke="#cfcfcf" stroke-width="1" stroke-dasharray="1.5,1"/><polygon points="10.8,286.8 18.5,292 15.2,293 11.5,297" fill="#cfcfcf"/><path d="M12.8,343.8 h10.4 v6.8 l-3.4,3.4 h-7z" fill="#cfcfcf"/><path d="M14.8,346.5 h6.4 M14.8,349.3 h6.4 M14.8,352 h3.6" stroke="#4e4e4e" stroke-width="1.1"/><path d="M20,353.6 l2.8,-2.8 h-2.8z" fill="#4e4e4e"/><path d="M12.2,372.8 l1,-3 l6.8,-6.8 l2,2 l-6.8,6.8 z" fill="none" stroke="#cfcfcf" stroke-width="1.1"/><path d="M19.6,362.6 l2.6,-2.4 q1.2,-0.8 2.2,0.2 q1,1 0.2,2.2 l-2.4,2.6z" fill="#cfcfcf"/><rect x="18.6" y="368.6" width="6.6" height="3" fill="none" stroke="#cfcfcf" stroke-width="0.9" stroke-dasharray="1.3,0.7"/><circle cx="26.2" cy="374" r="0.9" fill="#cfcfcf"/><path d="M15.8,389.5 q-1.2,-1.2 -2.2,-2.8 l-1.6,-2.6 q-0.4,-1 0.5,-1.3 q0.8,-0.2 1.5,0.7 l1.2,1.5 v-6.5 q0,-1 0.9,-1 q0.9,0 0.9,1 v4.2 v-5.6 q0,-1 0.9,-1 q0.9,0 0.9,1 v5.6 v-5 q0,-1 0.9,-1 q0.9,0 0.9,1 v5.2 v-3.6 q0,-0.9 0.9,-0.9 q0.9,0 0.9,0.9 v6.2 q0,2.2 -1.2,3.8 l-0.6,0.8 z" fill="#cfcfcf"/><circle cx="16.8" cy="402" r="4.2" fill="none" stroke="#cfcfcf" stroke-width="1.3"/><path d="M19.8,405 l4,4" stroke="#cfcfcf" stroke-width="1.6"/><rect x="7.5" y="415.8" width="6" height="6" fill="#ffffff" stroke="#2a2a2a" stroke-width="0.8"/><rect x="10" y="418.2" width="5.6" height="5.2" fill="none" stroke="#1e1e1e" stroke-width="1.6"/><path d="M8,421.3 l5,-5" stroke="#e02020" stroke-width="0.9"/><path d="M21,420 q4,-1 5.5,3.5" fill="none" stroke="#cfcfcf" stroke-width="1"/><path d="M20.7,420 l2,-1.8 v3.6z M26.5,425.5 l-1.8,-2 h3.6z" fill="#cfcfcf"/></svg>
<svg style="left:0;top:0" width="960" height="540"><rect x="6.8" y="428.8" width="12.5" height="12.5" fill="#ffffff"/><path d="M7,441 l12.2,-12" stroke="#e21c1c" stroke-width="1.3"/><rect x="13" y="435" width="16" height="16" fill="#ffffff"/><rect x="16.6" y="438.6" width="8.8" height="8.8" fill="#555" stroke="#222" stroke-width="0.8"/><path d="M13.5,450.5 l15,-15" stroke="#e21c1c" stroke-width="1.4"/></svg>
<svg style="left:0;top:0" width="960" height="540"><rect x="8.8" y="456.3" width="8.2" height="8.7" fill="#3a3a3a" stroke="#a8a8a8" stroke-width="0.9"/><rect x="11" y="458.5" width="3.8" height="4.3" fill="none" stroke="#c8c8c8" stroke-width="0.8"/><path d="M22.5,457 h5.6 M25.3,457 v7.5 M24,464.5 h2.6" stroke="#7e7e7e" stroke-width="1"/></svg>
<div class="a" style="left:7.7px;top:470.5px;width:20px;height:16px;background:#333333;border-radius:1px"></div>
<div class="a" style="left:7.7px;top:492.8px;width:20px;height:15.5px;background:#333333;border-radius:1px"></div>
<svg style="left:0;top:0" width="960" height="540"><rect x="11.2" y="473.2" width="12" height="11" fill="#ffffff"/><path d="M11.5,484 l11.5,-10.6" stroke="#e21c1c" stroke-width="1.3"/><rect x="12.8" y="496" width="9.5" height="9.3" fill="none" stroke="#bdbdbd" stroke-width="0.9"/><rect x="14.8" y="498" width="5.5" height="5.3" fill="#a8a8a8"/><polygon points="27.3,483.3 27.3,485.6 25,485.6" fill="#bdbdbd"/><polygon points="27.3,505.3 27.3,507.6 25,507.6" fill="#bdbdbd"/></svg>
<div class="a" style="left:743px;top:55.5px;width:17px;height:2.5px;background:#474747;"></div>
<svg style="left:0;top:0" width="960" height="540"><path d="M758,46 l-2,2 l2,2 M761,46 l-2,2 l2,2" fill="none" stroke="#bdbdbd" stroke-width="0.8"/><path d="M946,46 l2,2 l-2,2 M949,46 l2,2 l-2,2" fill="none" stroke="#bdbdbd" stroke-width="0.8"/><polygon points="751.8,64.5 758,68.3 751.8,72 745.6,68.3" fill="#d2d2d2"/><path d="M745.6,71.3 l6.2,3.8 l6.2,-3.8" fill="none" stroke="#d2d2d2" stroke-width="1.5"/><rect x="745" y="87.5" width="8" height="6.5" rx="3.2" fill="none" stroke="#d2d2d2" stroke-width="1.4"/><rect x="750.5" y="87.5" width="8" height="6.5" rx="3.2" fill="none" stroke="#d2d2d2" stroke-width="1.4"/></svg>
<div class="a" style="left:738px;top:104px;width:27px;height:1.2px;background:#3e3e3e;"></div>
<div class="a" style="left:825px;top:53px;width:132px;height:19.5px;background:#464646;"></div>
<div class="a" style="left:866px;top:54px;width:1px;height:18px;background:#3e3e3e;"></div>
<div class="a" style="left:928px;top:54px;width:1px;height:18px;background:#3e3e3e;"></div>
<div class="a" style="left:767px;top:72.5px;width:190px;height:1px;background:#535353;"></div>
<div class="t" style="left:776.80px;top:59.28px;font-size:10.17px;font-weight:bold;color:#ececec;transform:scaleX(0.809);transform-origin:0 0;">Properties</div>
<div class="t" style="left:834.80px;top:59.28px;font-size:10.17px;font-weight:bold;color:#b0b0b0;transform:scaleX(0.767);transform-origin:0 0;">Pages</div>
<div class="t" style="left:875.00px;top:59.28px;font-size:10.17px;font-weight:bold;color:#b0b0b0;transform:scaleX(0.760);transform-origin:0 0;">CC Libraries</div>
<div class="a" style="left:947.5px;top:73px;width:9.5px;height:463px;background:#494949;"></div>
<svg style="left:0;top:0" width="960" height="540"><polyline points="949.3,80.5 952.3,77.5 955.3,80.5" fill="none" stroke="#8a8a8a" stroke-width="1"/><polyline points="949.3,517.5 952.3,520.5 955.3,517.5" fill="none" stroke="#8a8a8a" stroke-width="1"/></svg>
<div class="a" style="left:948.5px;top:84px;width:7.5px;height:410px;background:#666666;border-radius:3.7px"></div>
<div class="a" style="left:769px;top:97px;width:178px;height:1px;background:#4c4c4c;"></div>
<div class="a" style="left:769px;top:179px;width:178px;height:1px;background:#4c4c4c;"></div>
<div class="a" style="left:769px;top:303px;width:178px;height:1px;background:#4c4c4c;"></div>
<div class="a" style="left:769px;top:350.5px;width:178px;height:1px;background:#4c4c4c;"></div>
<div class="a" style="left:769px;top:416.5px;width:178px;height:1px;background:#4c4c4c;"></div>
<div class="a" style="left:769px;top:483.3px;width:178px;height:1px;background:#4c4c4c;"></div>
<div class="t" style="left:775.60px;top:82.41px;font-size:8.72px;font-weight:normal;color:#e6e6e6;transform:scaleX(0.810);transform-origin:0 0;">Frame</div>
<div class="t" style="left:775.70px;top:108.01px;font-size:8.72px;font-weight:normal;color:#e6e6e6;transform:scaleX(0.845);transform-origin:0 0;">Transform</div>
<svg style="left:0;top:0" width="960" height="540"><rect x="779.5" y="130.6" width="4.6" height="4.6" fill="#ececec" stroke="#d4d4d4" stroke-width="0.9"/><rect x="779.5" y="137.1" width="4.6" height="4.6" fill="none" stroke="#d4d4d4" stroke-width="0.9"/><rect x="779.5" y="143.6" width="4.6" height="4.6" fill="none" stroke="#d4d4d4" stroke-width="0.9"/><rect x="786.4" y="130.6" width="4.6" height="4.6" fill="none" stroke="#d4d4d4" stroke-width="0.9"/><rect x="786.4" y="137.1" width="4.6" height="4.6" fill="none" stroke="#d4d4d4" stroke-width="0.9"/><rect x="786.4" y="143.6" width="4.6" height="4.6" fill="none" stroke="#d4d4d4" stroke-width="0.9"/><rect x="793.3" y="130.6" width="4.6" height="4.6" fill="none" stroke="#d4d4d4" stroke-width="0.9"/><rect x="793.3" y="137.1" width="4.6" height="4.6" fill="none" stroke="#d4d4d4" stroke-width="0.9"/><rect x="793.3" y="143.6" width="4.6" height="4.6" fill="none" stroke="#d4d4d4" stroke-width="0.9"/><path d="M784.1,132.90 h2.3 M791,132.90 h2.3" stroke="#d4d4d4" stroke-width="0.9"/><path d="M784.1,139.40 h2.3 M791,139.40 h2.3" stroke="#d4d4d4" stroke-width="0.9"/><path d="M784.1,145.90 h2.3 M791,145.90 h2.3" stroke="#d4d4d4" stroke-width="0.9"/><path d="M781.80,135.2 v1.9 M781.80,141.7 v1.9" stroke="#d4d4d4" stroke-width="0.9"/><path d="M788.70,135.2 v1.9 M788.70,141.7 v1.9" stroke="#d4d4d4" stroke-width="0.9"/><path d="M795.60,135.2 v1.9 M795.60,141.7 v1.9" stroke="#d4d4d4" stroke-width="0.9"/></svg>
<div class="t" style="left:809.60px;top:127.41px;font-size:8.72px;font-weight:normal;color:#e6e6e6;transform:scaleX(0.862);transform-origin:0 0;">X:</div>
<div class="t" style="left:809.60px;top:145.81px;font-size:8.72px;font-weight:normal;color:#e6e6e6;transform:scaleX(0.915);transform-origin:0 0;">Y:</div>
<div class="t" style="left:867.70px;top:127.41px;font-size:8.72px;font-weight:normal;color:#e6e6e6;transform:scaleX(0.876);transform-origin:0 0;">W:</div>
<div class="t" style="left:869.50px;top:145.81px;font-size:8.72px;font-weight:normal;color:#e6e6e6;transform:scaleX(0.849);transform-origin:0 0;">H:</div>
<div class="a" style="left:819.4px;top:122.7px;width:40.7px;height:14px;background:#434343;border:1px solid #5f5f5f"></div>
<div class="t" style="left:822.40px;top:126.26px;font-size:8.43px;font-weight:normal;color:#e8e8e8;transform:scaleX(0.896);transform-origin:0 0;">-4 mm</div>
<div class="a" style="left:819.4px;top:141.6px;width:40.7px;height:14px;background:#434343;border:1px solid #5f5f5f"></div>
<div class="t" style="left:822.40px;top:145.36px;font-size:8.43px;font-weight:normal;color:#e8e8e8;transform:scaleX(0.896);transform-origin:0 0;">-4 mm</div>
<div class="a" style="left:880.4px;top:122.7px;width:40.7px;height:14px;background:#434343;border:1px solid #5f5f5f"></div>
<div class="t" style="left:881.80px;top:126.26px;font-size:8.43px;font-weight:normal;color:#e8e8e8;transform:scaleX(0.926);transform-origin:0 0;">218 mm</div>
<div class="a" style="left:880.4px;top:141.6px;width:40.7px;height:14px;background:#434343;border:1px solid #5f5f5f"></div>
<div class="t" style="left:881.80px;top:145.36px;font-size:8.43px;font-weight:normal;color:#e8e8e8;transform:scaleX(0.926);transform-origin:0 0;">305 mm</div>
<svg style="left:0;top:0" width="960" height="540"><g fill="none" stroke="#cfcfcf" stroke-width="1.2"><rect x="929.2" y="134.8" width="4.2" height="6" rx="2" transform="rotate(-30 931.3 137.8)"/><rect x="932.2" y="139" width="4.2" height="6" rx="2" transform="rotate(-30 934.3 142)"/></g><path d="M928.2,135.5 l9,9" stroke="#cfcfcf" stroke-width="1.1"/></svg>
<svg style="left:0;top:0" width="960" height="540"><circle cx="934" cy="167.7" r="1.4" fill="#e0e0e0"/><circle cx="938" cy="167.7" r="1.4" fill="#e0e0e0"/><circle cx="942" cy="167.7" r="1.4" fill="#e0e0e0"/></svg>
<div class="t" style="left:775.00px;top:188.07px;font-size:9.01px;font-weight:normal;color:#e6e6e6;transform:scaleX(0.813);transform-origin:0 0;">Appearance</div>
<svg style="left:0;top:0" width="960" height="540"><rect x="775.8" y="203" width="12.2" height="12.5" fill="#ffffff" stroke="#8a8a8a" stroke-width="0.6"/><path d="M776.2,215.2 l11.6,-12" stroke="#e21c1c" stroke-width="1.7"/><rect x="775.8" y="222.5" width="12.2" height="12.7" fill="#ffffff" stroke="#8a8a8a" stroke-width="0.6"/><rect x="778.3" y="225" width="7.2" height="7.7" fill="#4a5a5a" stroke="#111" stroke-width="0.8"/><path d="M776.2,234.9 l11.6,-12.1" stroke="#e21c1c" stroke-width="1.7"/><rect x="777.5" y="244.5" width="9" height="8" fill="none" stroke="#3f8fe0" stroke-width="0.9" stroke-dasharray="2,2"/><rect x="775.8" y="242.8" width="3" height="3" fill="#3f8fe0"/><rect x="785" y="242.8" width="3" height="3" fill="#3f8fe0"/><rect x="775.8" y="251.5" width="3" height="3" fill="#3f8fe0"/><rect x="785" y="251.5" width="3" height="3" fill="#3f8fe0"/></svg>
<svg style="left:0;top:0" width="960" height="540" shape-rendering="crispEdges"><rect x="776.0" y="262.3" width="2.4" height="2.4" fill="#dadada"/><rect x="776.0" y="264.7" width="2.4" height="2.4" fill="#5e5e5e"/><rect x="776.0" y="267.1" width="2.4" height="2.4" fill="#dadada"/><rect x="776.0" y="269.5" width="2.4" height="2.4" fill="#5e5e5e"/><rect x="776.0" y="271.9" width="2.4" height="2.4" fill="#dadada"/><rect x="778.4" y="262.3" width="2.4" height="2.4" fill="#5e5e5e"/><rect x="778.4" y="264.7" width="2.4" height="2.4" fill="#dadada"/><rect x="778.4" y="267.1" width="2.4" height="2.4" fill="#5e5e5e"/><rect x="778.4" y="269.5" width="2.4" height="2.4" fill="#dadada"/><rect x="778.4" y="271.9" width="2.4" height="2.4" fill="#5e5e5e"/><rect x="780.8" y="262.3" width="2.4" height="2.4" fill="#dadada"/><rect x="780.8" y="264.7" width="2.4" height="2.4" fill="#5e5e5e"/><rect x="780.8" y="267.1" width="2.4" height="2.4" fill="#dadada"/><rect x="780.8" y="269.5" width="2.4" height="2.4" fill="#5e5e5e"/><rect x="780.8" y="271.9" width="2.4" height="2.4" fill="#dadada"/><rect x="783.2" y="262.3" width="2.4" height="2.4" fill="#5e5e5e"/><rect x="783.2" y="264.7" width="2.4" height="2.4" fill="#dadada"/><rect x="783.2" y="267.1" width="2.4" height="2.4" fill="#5e5e5e"/><rect x="783.2" y="269.5" width="2.4" height="2.4" fill="#dadada"/><rect x="783.2" y="271.9" width="2.4" height="2.4" fill="#5e5e5e"/><rect x="785.6" y="262.3" width="2.4" height="2.4" fill="#dadada"/><rect x="785.6" y="264.7" width="2.4" height="2.4" fill="#5e5e5e"/><rect x="785.6" y="267.1" width="2.4" height="2.4" fill="#dadada"/><rect x="785.6" y="269.5" width="2.4" height="2.4" fill="#5e5e5e"/><rect x="785.6" y="271.9" width="2.4" height="2.4" fill="#dadada"/></svg>
<div class="t" style="left:796.00px;top:207.81px;font-size:8.72px;font-weight:normal;color:#e6e6e6;transform:scaleX(0.844);transform-origin:0 0;">Fill</div>
<div class="t" style="left:796.00px;top:227.21px;font-size:8.72px;font-weight:normal;color:#cacaca;transform:scaleX(0.913);transform-origin:0 0;">Stroke</div>
<div class="a" style="left:796px;top:235px;width:23.5px;height:0.8px;background:#a8a8a8;"></div>
<div class="t" style="left:796.00px;top:246.41px;font-size:8.72px;font-weight:normal;color:#cacaca;transform:scaleX(0.863);transform-origin:0 0;">Corner</div>
<div class="a" style="left:796px;top:254.2px;width:23.5px;height:0.8px;background:#a8a8a8;"></div>
<div class="t" style="left:796.00px;top:265.61px;font-size:8.72px;font-weight:normal;color:#cacaca;transform:scaleX(0.879);transform-origin:0 0;">Opacity</div>
<div class="a" style="left:796px;top:273.4px;width:26.5px;height:0.8px;background:#a8a8a8;"></div>
<div class="a" style="left:842.3px;top:222.4px;width:52.30000000000007px;height:15.099999999999994px;background:#454545;border:1px solid #5f5f5f"></div><div class="a" style="left:854.5px;top:222.4px;width:2px;height:15.099999999999994px;background:#5f5f5f;"></div><div class="a" style="left:880.4px;top:222.4px;width:2px;height:15.099999999999994px;background:#5f5f5f;"></div>
<div class="a" style="left:842.3px;top:242.1px;width:52.30000000000007px;height:14.400000000000006px;background:#454545;border:1px solid #5f5f5f"></div><div class="a" style="left:854.5px;top:242.1px;width:2px;height:14.400000000000006px;background:#5f5f5f;"></div>
<div class="a" style="left:842.3px;top:261.4px;width:52.30000000000007px;height:14.600000000000023px;background:#454545;border:1px solid #5f5f5f"></div><div class="a" style="left:880.4px;top:261.4px;width:2px;height:14.600000000000023px;background:#5f5f5f;"></div>
<svg style="left:0;top:0" width="960" height="540"><polyline points="846.3,228.20000000000002 849,225.70000000000002 851.7,228.20000000000002" fill="none" stroke="#cfcfcf" stroke-width="1"/><polyline points="846.3,231.6 849,234.1 851.7,231.6" fill="none" stroke="#cfcfcf" stroke-width="1"/><polyline points="846.3,247.60000000000002 849,245.10000000000002 851.7,247.60000000000002" fill="none" stroke="#cfcfcf" stroke-width="1"/><polyline points="846.3,251.0 849,253.5 851.7,251.0" fill="none" stroke="#cfcfcf" stroke-width="1"/><polyline points="886.5,265.8 889.3,268.7 886.5,271.6" fill="none" stroke="#dcdcdc" stroke-width="1.1"/></svg>
<div class="t" style="left:858.40px;top:227.36px;font-size:8.43px;font-weight:normal;color:#e6e6e6;transform:scaleX(0.953);transform-origin:0 0;">0 pt</div>
<div class="t" style="left:857.80px;top:246.66px;font-size:8.43px;font-weight:normal;color:#e6e6e6;transform:scaleX(0.920);transform-origin:0 0;">4,233 mm</div>
<div class="t" style="left:845.80px;top:265.86px;font-size:8.43px;font-weight:normal;color:#e6e6e6;transform:scaleX(0.876);transform-origin:0 0;">100%</div>
<div class="a" style="left:925.5px;top:222.4px;width:13.799999999999955px;height:15.099999999999994px;background:#454545;border:1px solid #5f5f5f"></div>
<div class="a" style="left:925.5px;top:242.1px;width:13.799999999999955px;height:14.400000000000006px;background:#454545;border:1px solid #5f5f5f"></div>
<div class="a" style="left:899.1px;top:222.4px;width:27px;height:15.1px;background:#f0f0f0;"></div>
<div class="a" style="left:902.6px;top:227.8px;width:20.7px;height:5.1px;background:#000000;"></div>
<div class="a" style="left:899.1px;top:242.1px;width:27px;height:14.4px;background:#e4e4e4;"></div>
<svg style="left:0;top:0" width="960" height="540"><path d="M900.5,244 h22.5 v11.5" fill="none" stroke="#222" stroke-width="1.3"/></svg>
<svg style="left:0;top:0" width="960" height="540"><rect x="779" y="285.5" width="8" height="7.5" fill="none" stroke="#cfcfcf" stroke-width="0.9" stroke-dasharray="1.5,1.2"/><rect x="788.3" y="292" width="1" height="1" fill="#cfcfcf"/></svg>
<div class="t" style="left:797.00px;top:285.61px;font-size:8.72px;font-weight:normal;color:#cfcfcf;transform:scaleX(1.326);transform-origin:0 0;font-style:italic;">fx</div>
<svg style="left:0;top:0" width="960" height="540"><rect x="807" y="291.5" width="1.2" height="1.2" fill="#cfcfcf"/></svg>
<div class="t" style="left:775.30px;top:313.26px;font-size:8.43px;font-weight:normal;color:#e6e6e6;transform:scaleX(0.864);transform-origin:0 0;">Align</div>
<svg style="left:0;top:0" width="960" height="540"><rect x="779.5" y="331" width="11.5" height="11" fill="none" stroke="#d4d4d4" stroke-width="1" stroke-dasharray="1.6,1.2"/><path d="M791,341.5 h3 l-1.5,1.6z" fill="#d4d4d4"/><path d="M804.5,329.8 v14" stroke="#d4d4d4" stroke-width="1.1"/><rect x="806" y="332" width="6" height="3.5" fill="#d4d4d4"/><rect x="806" y="337.5" width="11" height="3.5" fill="#d4d4d4"/><path d="M835,329.8 v14" stroke="#d4d4d4" stroke-width="1.1"/><rect x="832" y="332" width="6" height="3.5" fill="#d4d4d4"/><rect x="829.8" y="337.5" width="10.5" height="3.5" fill="#d4d4d4"/><path d="M865.5,329.8 v14" stroke="#d4d4d4" stroke-width="1.1"/><rect x="858" y="332" width="6" height="3.5" fill="#d4d4d4"/><rect x="853.5" y="337.5" width="10.5" height="3.5" fill="#d4d4d4"/><path d="M876,330.5 h14" stroke="#d4d4d4" stroke-width="1.1"/><rect x="878.5" y="332" width="3.5" height="11" fill="#d4d4d4"/><rect x="884" y="332" width="3.5" height="6" fill="#d4d4d4"/><path d="M900.5,336.7 h12.5" stroke="#d4d4d4" stroke-width="1.1"/><rect x="902.5" y="331.5" width="3.5" height="10.5" fill="#d4d4d4"/><rect x="908" y="333.8" width="3.5" height="6" fill="#d4d4d4"/><path d="M924,343 h14" stroke="#d4d4d4" stroke-width="1.1"/><rect x="926.5" y="331" width="3.5" height="11" fill="#d4d4d4"/><rect x="932" y="336" width="3.5" height="6" fill="#d4d4d4"/></svg>
<div class="t" style="left:775.30px;top:360.41px;font-size:8.72px;font-weight:normal;color:#e6e6e6;transform:scaleX(0.888);transform-origin:0 0;">Text Wrap</div>
<div class="a" style="left:775.7px;top:376px;width:16.3px;height:15.8px;background:#2e2e2e;"></div>
<svg style="left:0;top:0" width="960" height="540"><path d="M779,379 h10 M779,381.5 h10 M779,384 h10 M779,386.5 h10 M779,389 h10" stroke="#d0d0d0" stroke-width="0.9"/><rect x="781" y="380.5" width="6" height="7" fill="none" stroke="#d0d0d0" stroke-width="0.9"/><path d="M801,379 h11 M801,389 h11 M801,381.5 h2 M810,381.5 h2 M801,384 h2 M810,384 h2 M801,386.5 h2 M810,386.5 h2" stroke="#d0d0d0" stroke-width="0.9"/><rect x="804.3" y="380.3" width="4.6" height="7.5" fill="#d0d0d0"/><path d="M824,379 h11 M824,389 h11 M824,381.5 h2 M833,381.5 h2 M824,384 h2 M833,384 h2 M824,386.5 h2 M833,386.5 h2" stroke="#d0d0d0" stroke-width="0.9"/><ellipse cx="829.5" cy="384" rx="3" ry="3.6" fill="#d0d0d0"/><path d="M846,378.5 h11 M846,389.5 h11" stroke="#d0d0d0" stroke-width="0.9"/><rect x="848.5" y="381" width="6" height="4.5" fill="#d0d0d0"/><path d="M846,387.5 h11" stroke="#d0d0d0" stroke-width="0.9"/><path d="M868,378.5 h11.5 M868,380.5 h11.5" stroke="#d0d0d0" stroke-width="0.9"/><rect x="870.8" y="383" width="6" height="6" fill="#d0d0d0"/><rect x="888.5" y="379.5" width="9" height="9" fill="none" stroke="#6f6f6f" stroke-width="1"/></svg>
<div class="t" style="left:902.00px;top:379.91px;font-size:8.72px;font-weight:normal;color:#7a7a7a;transform:scaleX(0.963);transform-origin:0 0;">Invert</div>
<svg style="left:0;top:0" width="960" height="540"><circle cx="934" cy="405" r="1.4" fill="#e0e0e0"/><circle cx="938" cy="405" r="1.4" fill="#e0e0e0"/><circle cx="942" cy="405" r="1.4" fill="#e0e0e0"/></svg>
<div class="t" style="left:775.30px;top:425.31px;font-size:8.72px;font-weight:normal;color:#e6e6e6;transform:scaleX(0.855);transform-origin:0 0;">Frame Fitting</div>
<svg style="left:0;top:0" width="960" height="540"><rect x="778.1" y="442.8" width="12" height="11.3" fill="none" stroke="#777" stroke-width="0.8" stroke-dasharray="1,1"/><rect x="796.5" y="442.8" width="12" height="11.3" fill="none" stroke="#777" stroke-width="0.8" stroke-dasharray="1,1"/><rect x="815.1" y="442.8" width="12" height="11.3" fill="none" stroke="#777" stroke-width="0.8" stroke-dasharray="1,1"/><rect x="834.1" y="442.8" width="12" height="11.3" fill="none" stroke="#777" stroke-width="0.8" stroke-dasharray="1,1"/><rect x="853.3" y="442.8" width="12" height="11.3" fill="none" stroke="#777" stroke-width="0.8" stroke-dasharray="1,1"/><rect x="871.8" y="442.8" width="12" height="11.3" fill="none" stroke="#777" stroke-width="0.8" stroke-dasharray="1,1"/><path d="M778.5,443.5 q6,2 11.5,0 q-1.5,5 0,10 q-6,-2 -11.5,0 q1.5,-5 0,-10z" fill="#9a9a9a"/><rect x="797.5" y="443.5" width="9.5" height="10" fill="#9a9a9a"/><path d="M808,443 v11" stroke="#9a9a9a" stroke-width="1.1"/><path d="M815.5,443.5 h11 v10 h-11z" fill="none" stroke="#9a9a9a" stroke-width="1"/><rect x="819" y="448" width="4" height="3.5" fill="none" stroke="#9a9a9a" stroke-width="1"/><path d="M834.5,443.5 h11 v10 h-11z" fill="none" stroke="#9a9a9a" stroke-width="1"/><rect x="835" y="444" width="5" height="5" fill="#9a9a9a"/><rect x="838" y="448" width="4" height="3.5" fill="none" stroke="#9a9a9a" stroke-width="1"/><rect x="853.5" y="443.3" width="11" height="10.5" fill="none" stroke="#9a9a9a" stroke-width="1"/><rect x="856" y="445.8" width="6" height="5.5" fill="#9a9a9a"/><path d="M873,444 q5,2 9.5,0 q-1.5,4.5 0,9 q-5,-2 -9.5,0 q1.5,-4.5 0,-9z" fill="#9a9a9a"/></svg>
<div class="a" style="left:891px;top:439.3px;width:48.6px;height:16.9px;background:transparent;border:1px solid #6a6a6a;border-radius:1px"></div>
<div class="t" style="left:902.00px;top:444.17px;font-size:9.01px;font-weight:normal;color:#e0e0e0;transform:scaleX(0.837);transform-origin:0 0;">Options</div>
<div class="a" style="left:778px;top:466.4px;width:8.8px;height:8.3px;background:transparent;border:1px solid #bcbcbc;border-radius:1px"></div>
<div class="t" style="left:791.50px;top:466.81px;font-size:8.72px;font-weight:normal;color:#e6e6e6;transform:scaleX(0.868);transform-origin:0 0;">Auto-Fit</div>
<div class="t" style="left:775.30px;top:490.61px;font-size:8.72px;font-weight:normal;color:#e6e6e6;transform:scaleX(0.840);transform-origin:0 0;">Quick Actions</div>
<div class="a" style="left:775.3px;top:505.3px;width:78.2px;height:15px;background:transparent;border:1px solid #6a6a6a;border-radius:1px"></div>
<div class="t" style="left:789.00px;top:509.67px;font-size:9.01px;font-weight:normal;color:#e0e0e0;transform:scaleX(0.815);transform-origin:0 0;">Convert Shape</div>
<div class="a" style="left:861px;top:505.3px;width:78.6px;height:15px;background:transparent;border:1px solid #6a6a6a;border-radius:1px"></div>
<div class="t" style="left:886.80px;top:509.67px;font-size:9.01px;font-weight:normal;color:#e0e0e0;transform:scaleX(0.817);transform-origin:0 0;">Arrange</div>
<div class="a" style="left:775.3px;top:528px;width:164.3px;height:12px;background:transparent;border:1px solid #6a6a6a;border-radius:1px"></div>
<div class="t" style="left:842.00px;top:532.87px;font-size:9.01px;font-weight:normal;color:#e0e0e0;transform:scaleX(0.775);transform-origin:0 0;">Import File</div>
<div class="a" style="left:0px;top:536px;width:960px;height:4px;background:#2b2b2b;"></div>
<svg style="left:0;top:0" width="960" height="540"><polyline points="141,12 144.1,15.2 147.2,12" fill="none" stroke="#d0d0d0" stroke-width="1.6"/><polyline points="183,11.5 186.0,14.5 189,11.5" fill="none" stroke="#d0d0d0" stroke-width="1.6"/><polyline points="219.4,11.5 222.2,14.5 225,11.5" fill="none" stroke="#d0d0d0" stroke-width="1.6"/><polyline points="255,11.5 258.0,14.5 261,11.5" fill="none" stroke="#d0d0d0" stroke-width="1.6"/><polyline points="745.7,12 748.35,15 751,12" fill="none" stroke="#d0d0d0" stroke-width="1.6"/><polyline points="131.5,528.5 134.5,531.5 137.5,528.5" fill="none" stroke="#dcdcdc" stroke-width="1.3"/><polyline points="284.7,528.5 287.35,531.5 290,528.5" fill="none" stroke="#d0d0d0" stroke-width="1.6"/><polyline points="361.2,528.5 364.29999999999995,531.5 367.4,528.5" fill="none" stroke="#d0d0d0" stroke-width="1.6"/><polyline points="884.4,229 887.5999999999999,232 890.8,229" fill="none" stroke="#dcdcdc" stroke-width="1.6"/><polyline points="929.4,229 932.4,232 935.4,229" fill="none" stroke="#dcdcdc" stroke-width="1.6"/><polyline points="929.4,248 932.4,251 935.4,248" fill="none" stroke="#dcdcdc" stroke-width="1.6"/></svg>
</body></html>
